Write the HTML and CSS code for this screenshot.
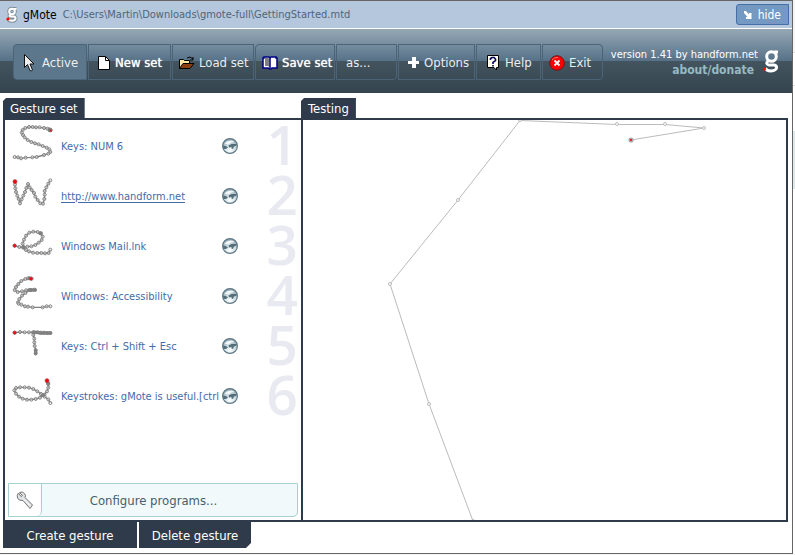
FILE: index.html
```html
<!DOCTYPE html>
<html lang="en">
<head>
<meta charset="utf-8">
<title>gMote</title>
<link rel="stylesheet" href="styles.css">
</head>
<body>
<div class="window">
  <header class="titlebar">
    <svg class="title-logo" width="12" height="17" viewBox="0 0 12 17"><g fill="none" stroke="#7f8d99" stroke-width="4"><circle cx="6" cy="5.5" r="2.8"/><path d="M8 3h2.5M4.500 8.500q-2 1.500 0 2h3q2.500.300 2 2.300-.500 2-3.500 2t-3.500-2"/></g><g fill="none" stroke="#fff" stroke-width="2"><circle cx="6" cy="5.500" r="2.800"/><path d="M8 3h2.500M4.500 8.500q-2 1.500 0 2h3q2.500.300 2 2.300-.500 2-3.500 2t-3.500-2"/></g><circle cx="2" cy="13" r="1.600" fill="#f00"/></svg>
    <h1 class="app-name">gMote</h1>
    <span class="path">C:\Users\Martin\Downloads\gmote-full\GettingStarted.mtd</span>
    <button class="hide" type="button"><svg width="8" height="8" viewBox="0 0 8 8"><path d="M0 0h2l3 3.500V2h2.500v6H2V6h1.500L0 2z" fill="#fff"/></svg>hide</button>
  </header>

  <div class="toolbar">
    <nav class="tools">
      <button type="button" class="tool first active w74"><svg width="14" height="20" viewBox="0 0 14 20"><path d="M1.500 1.500v13l3-3 2.500 6q2 1 2.500-.500l-2.500-6H11z" fill="#eee" stroke="#111"/></svg>Active</button>
      <button type="button" class="tool strong w83"><svg width="12" height="14" viewBox="0 0 12 14"><path d="M.500.500h7l4 4v9H.500z" fill="#fff" stroke="#000"/><path d="M7.500.500v4h4" fill="none" stroke="#000"/></svg>New set</button>
      <button type="button" class="tool tight w82"><svg width="16" height="14" viewBox="0 0 16 14"><path d="M.500 12.500v-9h4l1 1h5v3" fill="#ffe9a0" stroke="#000"/><path d="M.500 12.500l3.500-5h11l-4 5z" fill="#8b3e12" stroke="#000"/><path d="M8 2q3-2.500 6 1m0-2v3h-3" fill="none" stroke="#000"/></svg>Load set</button>
      <button type="button" class="tool first strong tight w80"><svg width="16" height="14" viewBox="0 0 16 14"><path d="M1 2h1V1h5l1 1 1-1h5v1h1v10h-5l-1 1H8l-2-1H1z" fill="#fff" stroke="#000080" stroke-width="1.500"/><path d="M3 2h3l1.500 1v8L6 10H3z" fill="#808080"/><path d="M8 2v10" stroke="#000080" stroke-width="1.500"/></svg>Save set</button>
      <button type="button" class="tool last w61">as...</button>
      <button type="button" class="tool w77"><svg width="11" height="11" viewBox="0 0 11 11"><path d="M4 0h4v4h3v3H8v4H4V7H0V4h4z" fill="#fff"/></svg>Options</button>
      <button type="button" class="tool w65"><svg width="14" height="16" viewBox="0 0 14 16"><path d="M1.500.500h11v12h-2v2.500L8 12.500H1.500z" fill="#fffff0" stroke="#000"/><path d="M4.500 5V3.500L6 2.500h2L9.500 4v1.500L7 7.500V9m0 1v1.500" fill="none" stroke="#000060" stroke-width="1.600"/></svg>Help</button>
      <button type="button" class="tool end tight w61"><svg width="16" height="16" viewBox="0 0 16 16"><circle cx="8" cy="8" r="7.300" fill="#f00" stroke="#6e1717"/><path d="M3 5q2-3 6-2.500" fill="none" stroke="#ff7777"/><path d="M5.500 5.500l5 5m0-5l-5 5" stroke="#fff" stroke-width="1.800"/></svg>Exit</button>
    </nav>
    <div class="about">
      <div class="about-text"><span>version 1.41 by handform.net</span><a href="#">about/donate</a></div>
      <svg width="18" height="26" viewBox="0 0 18 26"><g fill="none" stroke="#fff" stroke-width="3"><circle cx="9.500" cy="7.500" r="4.800"/><path d="M12 3h4M6 12q-3 3 1 4h5q3 .500 2.500 3t-5.500 3q-4.500 0-5.500-3"/></g><circle cx="2.500" cy="20" r="1.600" fill="#f00"/></svg>
    </div>
  </div>

  <svg class="defs" width="0" height="0" aria-hidden="true"><defs>
    <marker id="dot" markerUnits="userSpaceOnUse" markerWidth="16" markerHeight="16" refX="8" refY="8"><circle cx="8" cy="8" r="4.500" fill="#fff" fill-opacity=".4" stroke="#808080" stroke-width="3"/></marker>
    <radialGradient id="metal" cx=".5" cy=".8" r=".75"><stop offset="0" stop-color="#fff"/><stop offset=".5" stop-color="#cfdee3"/><stop offset="1" stop-color="#8fa6b1"/></radialGradient>
    <symbol id="orb" viewBox="0 0 16 16"><circle cx="8" cy="8" r="7.400" fill="url(#metal)" stroke="#607986" stroke-width="1.200"/><path d="M2.500 5.500q5-5 10-1.500-4 0-6 2.500z" fill="#fff" opacity=".85"/><path d="M1 7.500l3 .500 2 1.500-2 1.500H1.500zM6.500 7.500l3-1.500h5v1.500l-2.500 1-1 2.500-1.500-.500L9.500 9 7 9.500z" fill="#3f5a68" opacity=".85"/></symbol>
  </defs></svg>

  <main class="panels">
    <section class="gestures">
      <h2 class="tab">Gesture set</h2>
      <div class="pane list-pane">
        <ol class="list">
          <li><svg class="stroke" viewBox="15 9 150 150"><polyline points="152,36 148,34 142,32 132,30 119,28 108,28 98,27 87,27 76,30 68,36 65,44 69,51 74,58 83,66 94,72 105,76 116,79 128,84 140,89 148,94 151,102 145,107 132,111 110,117 97,118 77,119 63,121 54,118 44,117"/><circle cx="150" cy="36" r="7"/><circle class="start" cx="152" cy="38" r="3"/></svg><span>Keys: NUM 6</span><button type="button" aria-label="Edit 1"><svg><use href="#orb"/></svg></button><b>1</b></li>
          <li><svg class="stroke" viewBox="15 159 150 150"><polyline points="44,190 45,200 46,211 48,222 52,233 56,243 60,256 65,244 70,233 75,222 79,210 84,198 89,208 95,216 102,225 106,236 113,246 121,256 129,257 133,243 134,230 134,219 139,208 145,197 151,187"/><circle class="start" cx="45" cy="191" r="6"/></svg><a href="#">http://www.handform.net</a><button type="button" aria-label="Edit 2"><svg><use href="#orb"/></svg></button><b>2</b></li>
          <li><svg class="stroke" viewBox="15 309 150 150"><polyline points="44,383 58,387 70,388 82,386 94,385 106,381 116,374 125,366 128,356 123,346 113,342 100,341 88,344 78,353 72,365 68,377 70,389 78,396 87,400 99,404 112,405 124,405 135,406 146,405 151,395"/><circle cx="70" cy="387" r="6"/><circle cx="121" cy="346" r="6"/><circle class="start" cx="44" cy="383" r="5"/></svg><span>Windows Mail.lnk</span><button type="button" aria-label="Edit 3"><svg><use href="#orb"/></svg></button><b>3</b></li>
          <li><svg class="stroke" viewBox="15 18 150 150"><polyline points="95,41 84,40 76,42 64,48 55,57 48,66 44,75 53,81 66,79 78,76 91,75 104,74 91,75 76,84 66,92 58,102 54,112 56,116 64,119 75,124 84,125 98,127 128,127 140,124 151,124"/><path d="M86 75h20"/><circle cx="89" cy="40" r="6"/><circle class="start" cx="93" cy="41" r="5"/></svg><span>Windows: Accessibility</span><button type="button" aria-label="Edit 4"><svg><use href="#orb"/></svg></button><b>4</b></li>
          <li><svg class="stroke" viewBox="15 168 150 150"><polyline points="44,203 60,201 74,202 87,202 100,202 112,202 122,203 132,203 142,204 151,204 102,202 100,210 103,221 103,232 104,243 107,255 107,265"/><path d="M98 202h18M118 204h34M107 256v10"/><circle class="start" cx="44" cy="203" r="5"/></svg><span>Keys: Ctrl + Shift + Esc</span><button type="button" aria-label="Edit 5"><svg><use href="#orb"/></svg></button><b>5</b></li>
          <li><svg class="stroke" viewBox="15 318 150 150"><polyline points="141,347 145,357 145,368 141,379 133,389 120,398 107,402 94,404 81,404 68,401 57,395 48,386 43,376 48,369 60,367 74,367 87,368 100,372 112,379 123,387 134,395 145,403 151,414"/><circle cx="129" cy="391" r="6"/><circle cx="144" cy="355" r="6"/><circle class="start" cx="141" cy="347" r="6"/></svg><span>Keystrokes: gMote is useful.[ctrl</span><button type="button" aria-label="Edit 6"><svg><use href="#orb"/></svg></button><b>6</b></li>
        </ol>
        <button type="button" class="configure">
          <span class="wrench"><svg width="18" height="18" viewBox="0 0 18 18"><path d="M3.500 1.500q3-1.500 5 1t.500 4l7.500 7.500-2.500 3.500-7-8Q2.500 10 1.500 7t1-5l2.500 3.500 1.500-1z" fill="#dfe2e5" stroke="#777" stroke-linejoin="round"/><path d="M7 7.500l7 7" stroke="#fff"/></svg></span>
          <span class="configure-label">Configure programs...</span>
        </button>
      </div>
    </section>
    <section class="testing">
      <h2 class="tab">Testing</h2>
      <div class="pane canvas">
        <svg class="trace"><g transform="translate(-303 -120)" fill="none" stroke="#bbb"><path d="M631 140L704 128 665 124.500H617L520 120.500 458 200 390 284 429 404 473 521"/><g fill="#fff"><circle cx="704" cy="128" r="1.500"/><circle cx="665" cy="124" r="1.500"/><circle cx="617" cy="124" r="1.500"/><circle cx="520" cy="120" r="1.500"/><circle cx="458" cy="200" r="1.500"/><circle cx="390" cy="284" r="1.500"/><circle cx="429" cy="404" r="1.500"/><circle cx="473" cy="521" r="1.500"/></g><circle cx="631" cy="140" r="1.800" fill="#f00" stroke="#aaa" stroke-width="1.500"/></g></svg>
      </div>
    </section>
  </main>

  <footer class="actions">
    <button type="button" class="create">Create gesture</button>
    <button type="button" class="delete">Delete gesture</button>
  </footer>
</div>
</body>
</html>
```
FILE: styles.css
```css
* { box-sizing: border-box; }
body {
  margin: 0;
  padding-right: 2px;
  background: linear-gradient(#f6f6f6 52px, #d8d8d8 52px, #d8d8d8 53px, #fff 53px, #fff 85px, #d8d8d8 85px, #d8d8d8 86px, #fff 86px, #fff 131px, #dfe8ea 131px, #dfe8ea 189px, #fff 189px);
  font: 11px/14px "DejaVu Sans Condensed", "Noto Sans", sans-serif;
}
button { font: inherit; margin: 0; padding: 0; border: 0; background: none; cursor: pointer; }
h1, h2, ol { margin: 0; padding: 0; font-weight: normal; }
svg { display: block; flex: none; }
.defs { position: absolute; }

.window {
  display: flex;
  flex-direction: column;
  min-height: calc(100vh - 1px);
  border: 1px solid #666;
  border-left: 0;
  background: #fff;
}

.titlebar {
  display: flex;
  align-items: center;
  height: 28px;
  padding: 0 3px 0 6px;
  background: #b5c7dd;
  border-bottom: 1px solid #fff;
}
.app-name { margin: 0 6px 0 5px; font-size: 12px; line-height: 16px; color: #000; }
.path { color: #4d6679; }
.hide {
  display: flex;
  align-items: center;
  justify-content: space-between;
  width: 53px;
  height: 21px;
  margin-left: auto;
  padding: 0 7px;
  border: 1px solid #466fa8;
  border-radius: 3px 0 0 3px;
  background: #7499c2;
  color: #fff;
  font-size: 12px;
}

.toolbar {
  display: flex;
  align-items: center;
  justify-content: space-between;
  height: 64px;
  padding: 2px 12px 0 13px;
  background: linear-gradient(#96a8b5, #567188 32px, #43545f 32px, #35444f);
}
.tools { display: flex; gap: 1px; }
.tool {
  display: flex;
  align-items: center;
  gap: 5px;
  height: 36px;
  padding: 1px 0 0 9px;
  border: 1px solid #4b6478;
  color: #e8eef2;
  font-size: 13px;
  white-space: nowrap;
}
.tight { padding-left: 6px; gap: 4px; }
.strong { color: #fff; text-shadow: 0 0 1px #fff; }
.first { border-radius: 4px 0 0 0; }
.active { border-radius: 4px 0 0 4px; background: #5c768c; }
.last { border-radius: 0 0 4px 0; }
.end { border-radius: 0 4px 4px 0; }
.w61 { width: 61px; }
.w65 { width: 65px; }
.w74 { width: 74px; }
.w77 { width: 77px; }
.w80 { width: 80px; }
.w82 { width: 82px; }
.w83 { width: 83px; }
.about { display: flex; align-items: center; gap: 4px; color: #fff; }
.about-text { display: flex; flex-direction: column; align-items: flex-end; padding-top: 1px; }
.about-text a { padding-right: 4px; color: #97bac4; font-size: 12px; line-height: 16px; font-weight: bold; text-decoration: none; }

.panels { display: flex; flex: 1; padding: 5px 4px 0 3px; }
.gestures, .testing { display: flex; flex-direction: column; }
.gestures { flex: 0 0 298px; }
.testing { flex: 1; }
.tab {
  align-self: flex-start;
  height: 20px;
  padding: 1px 7px 0;
  background: #2f3b4b;
  color: #fff;
  font-size: 13px;
  line-height: 20px;
  clip-path: polygon(3px 0, 100% 0, 100% 100%, 0 100%, 0 3px);
}
.pane { flex: 1; border: 2px solid #2f3b4b; }
.list-pane { display: flex; flex-direction: column; justify-content: space-between; border-right: 0; padding: 1px 3px 3px 0; }
.canvas { display: flex; }
.trace { width: 100%; height: 100%; }
.list { list-style: none; }
.list li {
  display: grid;
  grid-template-columns: 50px 161px 16px 1fr;
  align-items: center;
  height: 50px;
  column-gap: 3px;
  color: #446ba9;
}
.list a { color: #446ba9; text-underline-offset: 2px; }
.list span, .list a { padding: 1px 0 0 3px; white-space: nowrap; }
.list button svg { width: 16px; height: 16px; }
.list b {
  align-self: start;
  color: #e9eaf1;
  text-align: right;
  font: 600 55px/46px "Open Sans", sans-serif;
}
.stroke { width: 50px; height: 50px; fill: none; stroke: #808080; stroke-width: 4; }
.stroke polyline { marker: url(#dot); }
.stroke path { stroke-width: 10; stroke-linecap: round; }
.stroke circle { fill: #808080; stroke: none; }
.stroke .start { fill: #f00; stroke: #a55; stroke-width: 2; }
.configure {
  display: flex;
  height: 34px;
  margin-left: 3px;
  border: 1px solid #a9ced6;
  background: #f2f9fb;
  color: #45606e;
  font-size: 13px;
  border-radius: 0 0 5px 0;
}
.wrench {
  display: grid;
  place-items: center;
  width: 33px;
  height: 32px;
  border-right: 1px solid #a9ced6;
  border-radius: 0 0 5px 0;
  background: #fff;
}
.configure-label { flex: 1; padding: 1px 32px 0 0; line-height: 32px; }

.actions { display: flex; gap: 2px; padding: 0 3px 5px; }
.actions button { height: 26px; padding-top: 1px; background: #2f3b4b; color: #fff; font-size: 13px; }
.create { width: 134px; }
.delete { width: 112px; clip-path: polygon(0 0, 100% 0, 100% calc(100% - 5px), calc(100% - 5px) 100%, 0 100%); }
```
